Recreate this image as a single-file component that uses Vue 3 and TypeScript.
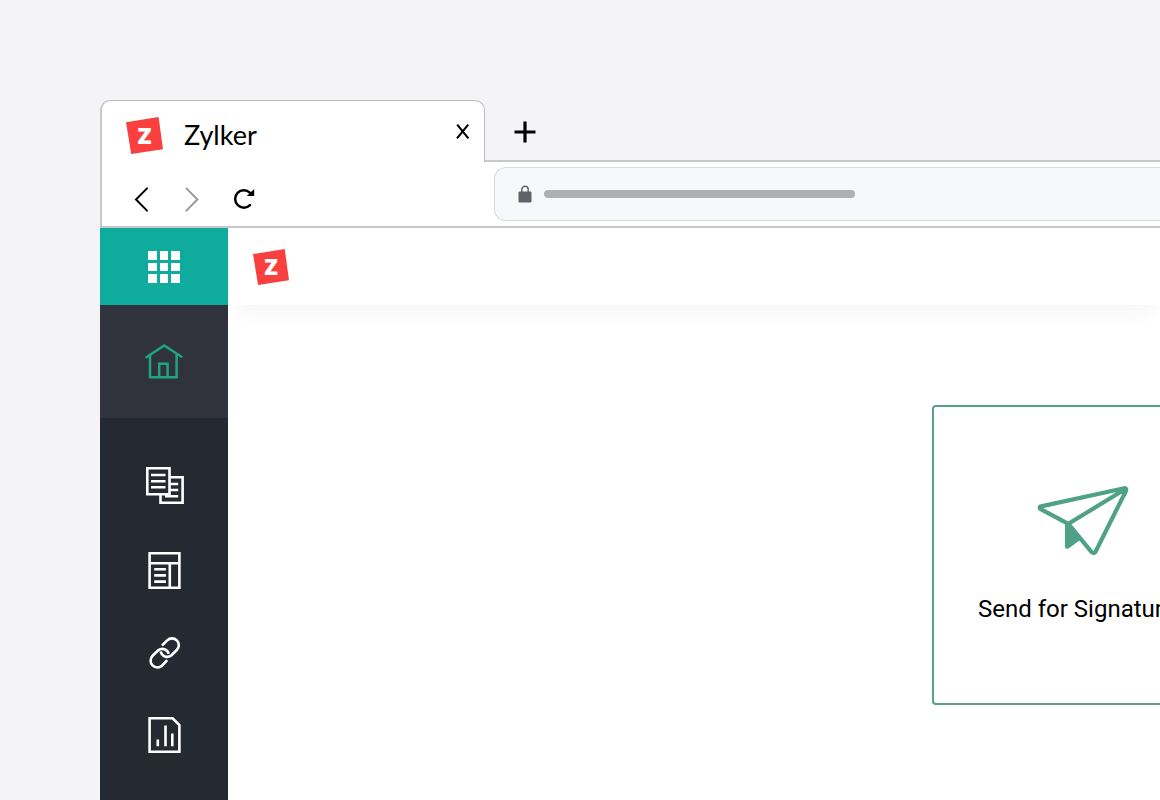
<script setup lang="ts">
import { ref } from 'vue'

interface NavItem {
  id: string
  label: string
  width: number
  height: number
  shape: string
}

const address = ref('')

const navItems: NavItem[] = [
  {
    id: 'documents',
    label: 'Documents',
    width: 40,
    height: 37,
    shape:
      'M3.3 1.3H25.5V27.3H3.3Z M26.5 10.2H38.6V35.7H16.5V28 M7 8H21.5 M7 14.2H21.5 M7 20.3H21.5 M26.5 17H34.2 M26.5 23H34.2 M21 29.2H34.2',
  },
  {
    id: 'templates',
    label: 'Templates',
    width: 33,
    height: 37,
    shape:
      'M1.6 1.3H31.4V35.7H1.6Z M1.6 11.2H31.4 M21.8 11.2V35.7 M6.2 17.3H17.9 M6.2 23.4H17.9 M6.2 29.6H17.9',
  },
  {
    id: 'links',
    label: 'SignForms',
    width: 30,
    height: 32,
    shape:
      'M11.7 14.6A6.6 6.6 0 0 0 22.2 18.5L27.8 13A6.6 6.6 0 0 0 18.2 3.3L13 8.5 M19.7 16.8A6.6 6.6 0 0 0 9.2 13.3L3.6 18.8A6.6 6.6 0 0 0 13.2 28.5L18.2 23.2',
  },
  {
    id: 'reports',
    label: 'Reports',
    width: 33,
    height: 36,
    shape:
      'M1.6 1.3H24.6L31.4 8V34.7H1.6Z M9.8 22.4V29.2 M17.5 8.4V29.2 M24.3 16.4V29.2',
  },
]
</script>

<template>
  <div class="page">
    <div class="browser">
      <div class="tab-strip">
        <div class="tab">
          <svg class="tab-logo" viewBox="0 0 37 37" role="img" aria-label="Zylker logo">
            <path d="M0 5.2 32.6 0 37 32.2 5.2 37Z" fill="#f9403f" />
            <text x="18.5" y="26.8" class="logo-letter">Z</text>
          </svg>
          <span class="tab-title">Zylker</span>
          <button class="tab-close" type="button" aria-label="Close tab">
            <svg width="14" height="15" viewBox="0 0 14 15" aria-hidden="true">
              <path d="M1.2.6 12.4 14.4M12.2.6 1 14.4" stroke="#000" stroke-width="2.1" fill="none" />
            </svg>
          </button>
        </div>
        <div class="strip-rest">
          <button class="new-tab" type="button" aria-label="New tab">
            <svg width="22" height="22" viewBox="0 0 22 22" aria-hidden="true">
              <path d="M11 .5v21M.5 11h21" stroke="#000" stroke-width="3.2" fill="none" />
            </svg>
          </button>
        </div>
      </div>

      <div class="toolbar">
        <div class="history">
          <button type="button" aria-label="Back">
            <svg width="14" height="25" viewBox="0 0 14 25" aria-hidden="true">
              <path d="M13 1.4 2 12.5l11 11.1" stroke="#000" stroke-width="2" stroke-linecap="round" fill="none" />
            </svg>
          </button>
          <button type="button" aria-label="Forward">
            <svg width="15" height="25" viewBox="0 0 15 25" aria-hidden="true">
              <path d="M2.4 1.4l11 11.1-11 11.1" stroke="#999" stroke-width="2" stroke-linecap="round" fill="none" />
            </svg>
          </button>
          <button type="button" aria-label="Reload">
            <svg width="22" height="22" viewBox="0 0 22 22" aria-hidden="true">
              <path d="M14.8 4.6A8.7 8.7 0 1 0 15 17.1" stroke="#000" stroke-width="2.5" stroke-linecap="round" fill="none" />
              <path d="M19.2 .9V7.9H11.8Z" fill="#000" />
            </svg>
          </button>
        </div>
        <div class="address">
          <svg width="14" height="18" viewBox="0 0 14 18" aria-hidden="true">
            <path d="M3.8 7V4.6a3.2 3.4 0 0 1 6.4 0V7" stroke="#5f6368" stroke-width="1.5" fill="none" />
            <rect x=".5" y="6.4" width="13" height="11.2" rx="1.4" fill="#5f6368" />
          </svg>
          <span class="address-line"></span>
          <input v-model="address" type="text" aria-label="Address" />
        </div>
      </div>

      <div class="app">
        <nav class="sidebar" aria-label="Main">
          <button class="launcher" type="button" aria-label="All apps">
            <span v-for="n in 9" :key="n" class="dot"></span>
          </button>
          <a class="home" href="#home" aria-label="Home">
            <svg width="38" height="36" viewBox="0 0 38 36" aria-hidden="true">
              <path
                d="M.6 13.8 19.2 1.4 37.2 13.2M5 11.2V33.2H31.6V10.8M14.2 33.2V19.8H22.6V33.2"
                stroke="#20a582"
                stroke-width="2.5"
                fill="none"
              />
            </svg>
          </a>
          <div class="nav-list">
            <a v-for="item in navItems" :key="item.id" :href="'#' + item.id" :aria-label="item.label">
              <svg
                :width="item.width"
                :height="item.height"
                :viewBox="`0 0 ${item.width} ${item.height}`"
                aria-hidden="true"
              >
                <path :d="item.shape" stroke="#fff" stroke-width="2.6" fill="none" />
              </svg>
            </a>
          </div>
        </nav>

        <div class="content">
          <header class="app-header">
            <svg class="header-logo" viewBox="0 0 37 37" role="img" aria-label="Zylker logo">
              <path d="M0 5.2 32.6 0 37 32.2 5.2 37Z" fill="#f9403f" />
              <text x="18.5" y="26.8" class="logo-letter">Z</text>
            </svg>
          </header>
          <main class="workspace">
            <button class="action-card" type="button">
              <svg width="92" height="70" viewBox="0 0 92 70" aria-hidden="true">
                <path
                  d="M3 20.6 87.2 2.2Q90 2 88.8 5.2L58.4 66Q56.4 68 54.4 65.8L31.4 37.8 3.2 22.8Q2 21.2 3.6 20.6ZM31.4 37.8 88 3.2"
                  stroke="#4fa287"
                  stroke-width="4.2"
                  stroke-linejoin="round"
                  fill="none"
                />
                <path d="M28 37.5H32L44.5 53 31.5 62.4Q28 63.8 28 60.4Z" fill="#4fa287" />
              </svg>
              <span>Send for Signature</span>
            </button>
          </main>
        </div>
      </div>
    </div>
  </div>
</template>

<style>
body {
  margin: 0;
  background: #f4f4f6;
}
</style>

<style scoped>
.page {
  box-sizing: border-box;
  min-height: 100vh;
  padding: 100px 0 0 100px;
  display: flex;
  overflow: hidden;
  background: #f4f4f6;
  color: #000;
  font-family: Lato, "Liberation Sans", sans-serif;
}

button {
  padding: 0;
  border: 0;
  background: none;
  color: inherit;
  font: inherit;
  cursor: pointer;
}

svg {
  display: block;
  flex: none;
  overflow: visible;
}

.browser {
  flex: 1;
  min-width: 0;
  display: flex;
  flex-direction: column;
}

.tab-strip {
  display: flex;
  height: 62px;
}

.tab {
  box-sizing: border-box;
  width: 385px;
  padding: 0 14px 0 24px;
  display: flex;
  align-items: center;
  border: 1px solid #bdbdbf;
  border-bottom: 0;
  border-left-width: 2px;
  border-left-color: #c8c8ca;
  border-radius: 10px 10px 0 0;
  background: #fff;
}

.tab-logo {
  width: 37px;
  height: 37px;
  margin-top: 8px;
}

.logo-letter {
  fill: #fff;
  font: 800 23px "Open Sans", sans-serif;
  text-anchor: middle;
}

.tab-title {
  flex: 1;
  margin: 6px 0 0 21px;
  font-size: 27px;
  line-height: 32px;
}

.strip-rest {
  flex: 1;
  display: flex;
  align-items: center;
  padding: 4px 0 0 29px;
  border-bottom: 2px solid #c8c8ca;
}

.toolbar {
  height: 64px;
  display: flex;
  align-items: center;
  border-left: 2px solid #c8c8ca;
  border-bottom: 2px solid #c8c8ca;
  background: #fff;
}

.history {
  box-sizing: border-box;
  width: 392px;
  padding: 10px 0 0 32px;
  display: flex;
  align-items: center;
  gap: 36px;
}

.address {
  position: relative;
  box-sizing: border-box;
  flex: 1;
  height: 54px;
  padding-left: 23px;
  display: flex;
  align-items: center;
  gap: 12px;
  border: 1px solid #d9dadd;
  border-right: 0;
  border-radius: 12px 0 0 12px;
  background: #f7f8fa;
}

.address input {
  flex: 1;
  min-width: 0;
  height: 40px;
  padding: 0;
  border: 0;
  outline: 0;
  background: none;
  font: inherit;
}

.address-line {
  position: absolute;
  left: 49px;
  width: 311px;
  height: 8px;
  border-radius: 4px;
  background: #afafb1;
  pointer-events: none;
}

.app {
  flex: 1;
  display: flex;
  background: #fff;
}

.sidebar {
  width: 128px;
  flex: none;
  position: relative;
  z-index: 1;
  background: #252932;
}

.launcher {
  box-sizing: border-box;
  width: 100%;
  height: 77px;
  display: grid;
  grid-template-columns: 9px 8px 9px;
  grid-template-rows: 9px 8px 9px;
  gap: 3px;
  place-content: center;
  background: #0fab9d;
}

.dot {
  background: #fff;
}

.home {
  height: 113px;
  display: flex;
  align-items: center;
  justify-content: center;
  background: #30333b;
}

.nav-list {
  padding: 49px 0;
  display: flex;
  flex-direction: column;
  align-items: center;
  gap: 48px;
}

.content {
  flex: 1;
  min-width: 0;
}

.app-header {
  height: 77px;
  padding-left: 25px;
  display: flex;
  align-items: center;
  background: #fff;
  box-shadow: 0 16px 20px -8px rgba(0, 0, 0, 0.04);
}

.header-logo {
  width: 36px;
  height: 36px;
}

.workspace {
  padding: 100px 0 0;
  display: flex;
  justify-content: flex-end;
}

.action-card {
  box-sizing: border-box;
  width: 302px;
  height: 300px;
  margin-right: -74px;
  flex: none;
  display: flex;
  flex-direction: column;
  align-items: center;
  justify-content: center;
  gap: 37px;
  border: 2px solid #55a18a;
  border-radius: 4px;
  background: #fff;
}

.action-card span {
  width: 210px;
  font-family: Roboto, "Liberation Sans", sans-serif;
  font-size: 24px;
  line-height: 32px;
  text-align: left;
  white-space: nowrap;
}
</style>
